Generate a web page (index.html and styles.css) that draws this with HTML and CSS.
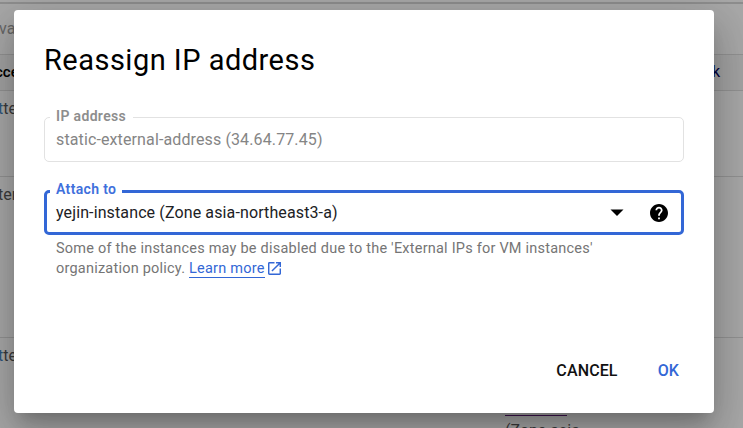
FILE: index.html
```html
<!DOCTYPE html>
<html lang="en">
<head>
<meta charset="utf-8">
<title>Reassign IP address</title>
<link rel="stylesheet" href="styles.css">
</head>
<body>
<div class="page">
  <div class="toolbar"><span class="muted">va</span></div>
  <div class="row head"><span class="clip">cce</span><span class="last">k</span></div>
  <div class="row short"><span class="link">t</span>te</div>
  <div class="row tall">ter</div>
  <div class="row bottom"><div><span class="link">t</span>te</div><div class="zone"><span class="visited"></span><span>(Zone asia-</span></div></div>
</div>
<div class="backdrop">
  <section class="dialog" role="dialog">
    <h1>Reassign IP address</h1>
    <div class="field disabled">
      <label>IP address</label>
      <span class="value">static-external-address (34.64.77.45)</span>
    </div>
    <div class="field active">
      <label>Attach to</label>
      <span class="value">yejin-instance (Zone asia-northeast3-a)</span>
      <svg class="arrow" viewBox="0 0 14 7"><path d="M.5 .5h13L7 7z"/></svg>
      <svg class="help" viewBox="2 2 20 20"><path d="M12 2C6.48 2 2 6.48 2 12s4.48 10 10 10 10-4.48 10-10S17.52 2 12 2zm1 17h-2v-2h2v2zm2.07-7.75l-.9.92C13.45 12.9 13 13.5 13 15h-2v-.5c0-1.1.45-2.1 1.17-2.83l1.24-1.26c.37-.36.59-.86.59-1.41 0-1.1-.9-2-2-2s-2 .9-2 2H8c0-2.21 1.79-4 4-4s4 1.79 4 4c0 .88-.36 1.68-.93 2.25z"/></svg>
    </div>
    <p class="hint">Some of the instances may be disabled due to the 'External IPs for VM instances'<br>organization policy. <a>Learn more</a><svg class="ext" viewBox="3 3 18 18"><path d="M19 19H5V5h7V3H5a2 2 0 0 0-2 2v14a2 2 0 0 0 2 2h14c1.1 0 2-.9 2-2v-7h-2v7zM14 3v2h3.59l-9.83 9.83 1.41 1.41L19 6.41V10h2V3h-7z"/></svg></p>
    <div class="actions"><button>CANCEL</button><button class="ok">OK</button></div>
  </section>
</div>
</body>
</html>
```
FILE: styles.css
```css
* { box-sizing: border-box; }
body {
  margin: 0;
  width: 743px;
  height: 428px;
  overflow: hidden;
  position: relative;
  font-family: Roboto, "Liberation Sans", sans-serif;
  background: #a8a8a8;
}
.page { height: 428px; overflow: hidden; font-size: 16px; line-height: 20px; color: #3b3b3b; padding-top: 2px; }
.toolbar { height: 53px; border-top: 2px solid #8e8e8e; border-bottom: 1px solid #929292; padding-top: 15px; }
.muted { color: #666; margin-left: -1px; }
.row { border-bottom: 1px solid #929292; padding-top: 8px; text-indent: -2px; }
.head { height: 36px; background: #a3a3a3; color: #000; font-weight: 500; display: flex; justify-content: space-between; padding: 7px 23px 0 0; font-size: 15px; }
.head .clip { text-indent: -5px; }
.last { color: #00003c; font-weight: 400; font-size: 16px; }
.short { height: 86px; }
.tall { height: 161px; }
.bottom { height: 110px; border: 0; }
.link { color: #2c557f; }
.zone { margin-left: 505px; display: flex; flex-direction: column; padding-top: 49px; text-indent: 0; }
.visited { width: 62px; height: 1px; background: #3f1250; margin-bottom: 5px; }
.backdrop { position: absolute; inset: 0; padding: 10px 29px 15px 14px; display: flex; }
.dialog {
  width: 700px;
  height: 403px;
  padding: 32px 30px 0;
  background: #fff;
  border-radius: 4px;
  box-shadow: 0 11px 15px -7px rgba(0,0,0,.2), 0 24px 38px 3px rgba(0,0,0,.14), 0 9px 46px 8px rgba(0,0,0,.12);
}
h1 { margin: 0 0 38px; font-size: 29px; line-height: 37px; font-weight: 400; letter-spacing: .48px; color: #000; }
.field { position: relative; display: flex; align-items: center; width: 640px; height: 45px; border: 1px solid #e2e2e2; border-radius: 5px; padding: 0 11px; font-size: 16px; letter-spacing: .12px; }
.field label { position: absolute; top: -11px; left: 5px; padding: 0 7px 0 6px; background: #fff; font-size: 14px; line-height: 19px; font-weight: 600; color: #8d8d8d; letter-spacing: .35px; }
.disabled .value { color: #858585; }
.active { margin-top: 28px; border: 3px solid #3367d6; padding: 0 13px 0 9px; color: #202124; }
.active label { top: -13px; left: 3px; padding-right: 6px; color: #3f70dc; }
.active .value { flex: 1; }
.arrow { width: 14px; height: 7px; margin-right: 26px; }
.help { width: 18px; height: 18px; }
.hint { margin: 4px 0 0 12px; font-size: 14.5px; line-height: 20px; color: #757575; letter-spacing: .22px; }
.hint a { color: #3367d6; border-bottom: 1px solid #3367d6; }
.ext { width: 13px; height: 13px; margin-left: 3px; vertical-align: -2px; fill: #3367d6; }
.actions { display: flex; justify-content: flex-end; gap: 40px; margin-top: 82px; padding-right: 5px; }
button { border: 0; padding: 0; background: none; font: 500 16px/20px Roboto, "Liberation Sans", sans-serif; letter-spacing: .12px; color: #111; }
.ok { color: #3367d6; }
```
